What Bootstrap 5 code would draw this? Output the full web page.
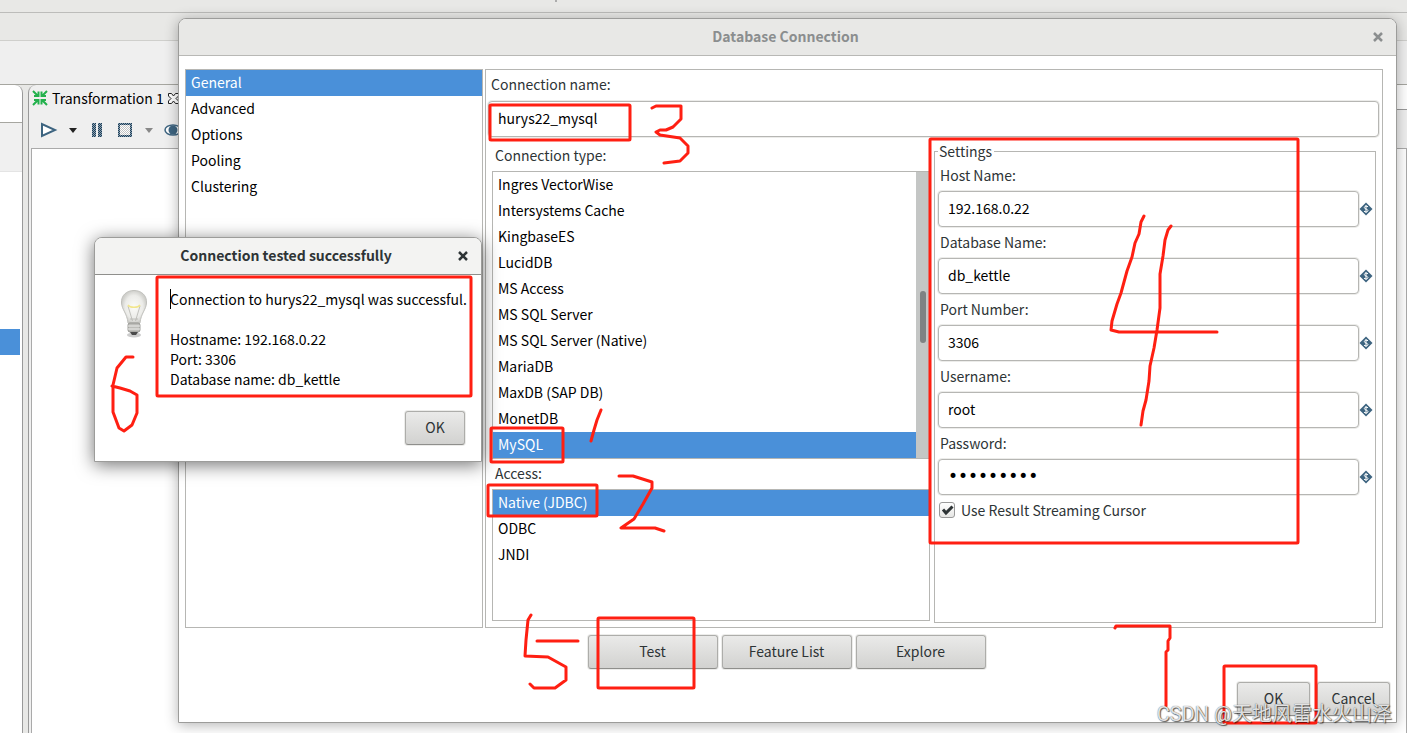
<!DOCTYPE html>
<html lang="en">
<head>
<meta charset="utf-8">
<meta name="viewport" content="width=device-width, initial-scale=1">
<title>Database Connection</title>
<link href="https://cdn.jsdelivr.net/npm/bootstrap@5.3.0/dist/css/bootstrap.min.css" rel="stylesheet">
<style>
:root{--line:#b6b6b3;--pick:#4a90d9;--ink:#2e3436;--ui:"Noto Sans CJK SC","Noto Sans",sans-serif}
body{font-family:var(--ui);font-size:14px;line-height:20px;color:#000;background:#fff;overflow:hidden}
/* application behind the dialogs */
.band-a{height:13px;background:#e8e8e6;border-bottom:1px solid #bcbcba}
.band-b{height:28px;background:#e8e8e6;border-bottom:1px solid #cfcfcc}
.band-c{height:43px;background:#efefef}
.workspace{border-top:1px solid #a6a6a0;background:#e8e8e6}
.side{width:23px;background:#fff;border-right:1px solid #999;border-top-right-radius:8px}
.side-tab{height:38px;border-bottom:1px solid #a6a6a0}
.side-bar{height:49px;background:#f0f0f0;border-bottom:1px solid #e4e4e4}
.side-pick{height:26px;width:20px;margin-top:157px;background:var(--pick)}
.editor{margin-left:5px;border-left:1px solid #999;background:#efefef;border-top-left-radius:8px}
.tabs{height:26px;padding-left:3px;gap:4px}
.tabs-end{width:14px;height:25px;background:#fff;border-bottom:1px solid #999}
.tools{height:37px;padding-left:11px}
.canvas{margin-left:2px;border:1px solid #aaa;border-bottom:0;background:#fff}
/* windows */
.win{background:#fff;border:1px solid #9c9c9a;border-radius:8px 8px 0 0}
.win-main{left:178px;right:10px;top:18px;box-shadow:0 2px 14px rgba(0,0,0,.3)}
.win-note{left:94px;top:237px;width:388px;box-shadow:0 3px 18px rgba(0,0,0,.55)}
.titlebar{height:37px;background:#e8e8e6;border-bottom:1px solid #b8b8b5;border-radius:7px 7px 0 0;color:#8b8e8f;font-weight:700;padding:0 12px 2px}
.win-note .titlebar{background:#f3f3f2;border-color:#8f8f8c;color:var(--ink)}
.close-x{border:0;background:none;padding:0;width:12px;height:12px;display:flex;color:inherit}
.win-body{padding:13px 13px 0 6px;gap:2px}
.frame{border:1px solid var(--line)}
.cats{width:298px}
.panel{min-height:559px;padding:4px 3px 4px 2px}
.picker{border-radius:0;--bs-list-group-border-radius:0}
.picker .list-group-item{border:0;padding:2px 5px 4px;color:#000;line-height:20px}
.picker .list-group-item.active{background:var(--pick);color:#fff;margin-top:0}
.cap{color:var(--ink);line-height:20px;display:block}
.cap-name{padding:0 3px 7px}
.cap-type{padding:8px 3px 6px}
.cap-access{padding:4px 3px 6px}
.field{height:36px;border:1px solid var(--line);border-radius:4px;padding:0 9px 2px;font-size:14px;color:#000;box-shadow:0 0 0 1px #ececea}
.field[type=password]{font:17px "DejaVu Sans",sans-serif}
.type-list{height:288px}
.track{width:13px;background:#c4c6c5;padding:119px 3px 0 4px}
.thumb{height:52px;background:#7e8283;border-radius:3px}
.access-list{height:132px}
.left-col{flex:1;padding:0 0 0 4px}
.set{width:442px;border:1px solid var(--line);padding:0 2px 0 3px;height:482px;margin:4px 3px 0 4px}
.set legend{float:none;width:auto;font-size:14px;line-height:20px;color:var(--ink);margin:0 0 4px;padding:0 2px 0 1px}
.set .field{width:421px}
.set-row{height:67px}
.set-row .cap{padding:0 2px;margin-bottom:6px}
.tick-row{gap:6px;padding-left:1px}
.tick{appearance:none;width:16px;height:16px;border:1px solid #999;border-radius:3px;margin:0;background:linear-gradient(#fff,#e6e6e4)}
.tick:checked{background:url("data:image/svg+xml,%3Csvg xmlns='http://www.w3.org/2000/svg' viewBox='0 0 14 14'%3E%3Cpath d='M3 6.500L6 10L12.500 3.500' fill='none' stroke='%232e3436' stroke-width='3'/%3E%3C/svg%3E") center/14px no-repeat,linear-gradient(#fff,#e6e6e4)}
.btn-gtk{height:34px;padding:0 0 2px;font-size:14px;color:var(--ink);background:linear-gradient(#eaeae9,#d2d2d0);border:1px solid #adadaa;border-bottom-color:#8f8f8c;border-radius:3px;box-shadow:0 0 0 1px #ececea}
.btn-wide{width:130px}
.btn-mid{width:73px}
.btn-small{width:60px}
.actions{padding:7px 2px 0 0}
.closing{padding:13px 6px 6px 0;gap:7px}
.note-body{padding:14px 0 0 24px;gap:21px}
.note-foot{padding:22px 16px 16px}
.caret{border-left:1px solid #000;margin-right:-1px}
.marks{left:0;top:0;pointer-events:none;z-index:5}
.credit{right:15px;bottom:4px;z-index:6;font:20px/30px Roboto,"Noto Sans CJK SC",sans-serif;color:rgba(255,255,255,.85);text-shadow:1px 1px 1px rgba(0,0,0,.6),0 0 1px rgba(0,0,0,.7)}
</style>
</head>
<body>
<main class="position-relative min-vh-100 d-flex flex-column">
  <div class="band-a"></div><div class="band-b"></div><div class="band-c"></div>
  <div class="workspace d-flex flex-grow-1">
    <div class="side"><div class="side-tab"></div><div class="side-bar"></div><div class="side-pick"></div></div>
    <div class="editor flex-grow-1 d-flex flex-column">
      <div class="tabs d-flex align-items-center">
        <svg width="16" height="16" viewBox="0 0 16 16" fill="none" stroke="#22b14c" stroke-width="2"><path d="M1 1L6 6M15 1L10 6M1 15L6 10M15 15L10 10M2 6H6.500V1.500M9.500 1.500V6H14M2 10H6.500V14.500M9.500 14.500V10H14"/></svg>
        <span>Transformation 1</span>
        <svg width="11" height="11" viewBox="0 0 11 11" fill="#fff" stroke="#222"><path d="M.5.5h3l2 2.500 2-2.500h3v2.500L8 5.500l2.500 2.500v2.500h-3l-2-2.500-2 2.500h-3V8L3 5.500.5 3z"/></svg>
        <span class="tabs-end ms-auto align-self-start"></span>
      </div>
      <div class="tools d-flex align-items-center">
        <svg width="150" height="16" viewBox="0 0 150 16"><defs><pattern id="dots" width="2" height="2" patternUnits="userSpaceOnUse"><path d="M0 0h1v1H0zM1 1h1v1H1z" fill="#1d3e58"/></pattern><pattern id="faint" width="2" height="2" patternUnits="userSpaceOnUse"><path d="M0 0h1v1H0zM1 1h1v1H1z" fill="#c4c4c4"/></pattern></defs>
          <path d="M2 2v12l13-6z" fill="#fff" stroke="#3d6480" stroke-width="2"/><path d="M29 6h8l-4 5z" fill="#222"/>
          <path d="M52 1h4v14h-4zM58 1h4v14h-4z" fill="#8ba0b0"/><path d="M52 1h4v14h-4zM58 1h4v14h-4z" fill="url(#dots)"/>
          <path d="M79 2h12v12h-12z" fill="#fff" stroke="#8ba0b0" stroke-width="2"/><path d="M80 3h10v10h-10z" fill="url(#faint)"/><path d="M79 2h12v12h-12z" fill="none" stroke="url(#dots)" stroke-width="2"/><path d="M105 6h8l-4 5z" fill="#888"/>
          <ellipse cx="133" cy="8" rx="8" ry="5" fill="#fff" stroke="#3d6480" stroke-width="1.500"/><circle cx="133" cy="8" r="4.500" fill="#3d6480"/></svg>
      </div>
      <div class="canvas flex-grow-1"></div>
    </div>
  </div>

  <section class="win win-main position-absolute">
    <header class="titlebar d-flex align-items-center"><span class="flex-grow-1 text-center ps-2">Database Connection</span>
      <button class="close-x" type="button" aria-label="Close"><svg width="12" height="12" viewBox="0 0 12 12" stroke="currentColor" stroke-width="2.500"><path d="M2 3L10 11M10 3L2 11"/></svg></button></header>
    <div class="win-body d-flex">
      <nav class="cats frame">
        <div class="list-group picker">
          <button type="button" class="list-group-item list-group-item-action active">General</button>
          <button type="button" class="list-group-item list-group-item-action">Advanced</button>
          <button type="button" class="list-group-item list-group-item-action">Options</button>
          <button type="button" class="list-group-item list-group-item-action">Pooling</button>
          <button type="button" class="list-group-item list-group-item-action">Clustering</button>
        </div>
      </nav>
      <form class="panel frame flex-grow-1">
        <label class="cap cap-name" for="cname">Connection name:</label>
        <input id="cname" class="field w-100" value="hurys22_mysql">
        <div class="d-flex">
          <div class="left-col">
            <div class="cap cap-type">Connection type:</div>
            <div class="frame type-list d-flex">
              <div class="list-group picker flex-grow-1">
                <button type="button" class="list-group-item list-group-item-action">Ingres VectorWise</button>
                <button type="button" class="list-group-item list-group-item-action">Intersystems Cache</button>
                <button type="button" class="list-group-item list-group-item-action">KingbaseES</button>
                <button type="button" class="list-group-item list-group-item-action">LucidDB</button>
                <button type="button" class="list-group-item list-group-item-action">MS Access</button>
                <button type="button" class="list-group-item list-group-item-action">MS SQL Server</button>
                <button type="button" class="list-group-item list-group-item-action">MS SQL Server (Native)</button>
                <button type="button" class="list-group-item list-group-item-action">MariaDB</button>
                <button type="button" class="list-group-item list-group-item-action">MaxDB (SAP DB)</button>
                <button type="button" class="list-group-item list-group-item-action">MonetDB</button>
                <button type="button" class="list-group-item list-group-item-action active">MySQL</button>
              </div>
              <div class="track"><div class="thumb"></div></div>
            </div>
            <div class="cap cap-access">Access:</div>
            <div class="frame access-list">
              <div class="list-group picker">
                <button type="button" class="list-group-item list-group-item-action active">Native (JDBC)</button>
                <button type="button" class="list-group-item list-group-item-action">ODBC</button>
                <button type="button" class="list-group-item list-group-item-action">JNDI</button>
              </div>
            </div>
          </div>
          <fieldset class="set">
            <legend>Settings</legend>
            <div class="set-row"><label class="cap" for="host">Host Name:</label><div class="d-flex align-items-center"><input id="host" class="field" value="192.168.0.22"><svg width="14" height="14"><use href="#var"/></svg></div></div>
            <div class="set-row"><label class="cap" for="db">Database Name:</label><div class="d-flex align-items-center"><input id="db" class="field" value="db_kettle"><svg width="14" height="14"><use href="#var"/></svg></div></div>
            <div class="set-row"><label class="cap" for="port">Port Number:</label><div class="d-flex align-items-center"><input id="port" class="field" value="3306"><svg width="14" height="14"><use href="#var"/></svg></div></div>
            <div class="set-row"><label class="cap" for="user">Username:</label><div class="d-flex align-items-center"><input id="user" class="field" value="root"><svg width="14" height="14"><use href="#var"/></svg></div></div>
            <div class="set-row"><label class="cap" for="pw">Password:</label><div class="d-flex align-items-center"><input id="pw" type="password" class="field" value="hurys2022"><svg width="14" height="14"><use href="#var"/></svg></div></div>
            <div class="tick-row d-flex align-items-center"><input id="stream" type="checkbox" class="tick" checked><label class="cap" for="stream">Use Result Streaming Cursor</label></div>
          </fieldset>
        </div>
      </form>
    </div>
    <div class="actions d-flex justify-content-center gap-1">
      <button type="button" class="btn btn-gtk btn-wide">Test</button>
      <button type="button" class="btn btn-gtk btn-wide">Feature List</button>
      <button type="button" class="btn btn-gtk btn-wide">Explore</button>
    </div>
    <div class="closing d-flex justify-content-end">
      <button type="button" class="btn btn-gtk btn-mid">OK</button>
      <button type="button" class="btn btn-gtk btn-mid">Cancel</button>
    </div>
  </section>

  <section class="win win-note position-absolute">
    <header class="titlebar d-flex align-items-center"><span class="flex-grow-1 text-center ps-2">Connection tested successfully</span>
      <button class="close-x" type="button" aria-label="Close"><svg width="12" height="12" viewBox="0 0 12 12" stroke="currentColor" stroke-width="2.500"><path d="M2 3L10 11M10 3L2 11"/></svg></button></header>
    <div class="note-body d-flex">
      <svg width="30" height="50" viewBox="0 0 30 50"><defs><radialGradient id="glass"><stop offset="0" stop-color="#fbfbf8"/><stop offset=".7" stop-color="#ecece9"/><stop offset="1" stop-color="#cfcfcb"/></radialGradient></defs>
        <ellipse cx="15" cy="46" rx="7" ry="2.500" fill="#ccc"/>
        <path d="M15 1.500C7.500 1.500 2 6.500 2.500 14c.5 7 5.500 10 6.500 20h12c1-10 6-13 6.500-20C28 6.500 22.500 1.500 15 1.500z" fill="url(#glass)" stroke="#c0c0bc"/>
        <path d="M9 17l4.500 15M21 17l-4.500 15M11 30h8" fill="none" stroke="#b5b5b0" stroke-width=".8"/><path d="M9 16c2 3 10 3 12 0" fill="none" stroke="#f2e68c" stroke-width="1.500"/>
        <rect x="9" y="34" width="12" height="9" rx="2" fill="#bdbdb9" stroke="#8a8a86" stroke-width=".8"/><path d="M9 37h12M9 40h12" stroke="#ededeb"/><path d="M11 43h8l-2 3h-4z" fill="#4a4a4a"/></svg>
      <div><span class="caret"></span>Connection to hurys22_mysql was successful.<br><br>Hostname: 192.168.0.22<br>Port: 3306<br>Database name: db_kettle</div>
    </div>
    <div class="d-flex justify-content-end note-foot"><button type="button" class="btn btn-gtk btn-small">OK</button></div>
  </section>

  <svg class="marks position-absolute w-100 h-100" viewBox="0 0 1407 733" fill="none" stroke="#ff1f12" stroke-width="3" stroke-linejoin="round" stroke-linecap="round">
    <path d="M556 0V2" stroke="#999" stroke-width="1.500" stroke-linecap="butt"/>
    <rect x="490" y="105" width="140" height="35" rx="1"/><rect x="157" y="277" width="314" height="119" rx="1"/><rect x="491" y="428" width="72" height="34" rx="1"/><rect x="488" y="485" width="109" height="31" rx="1"/><rect x="930" y="139" width="368" height="404" rx="1"/><rect x="598" y="618" width="96" height="70" rx="1"/><rect x="1224" y="666" width="92" height="57" rx="1"/>
    <path d="M652 108L656 106H681V119L673 127L666 130H660L656 132L660 135L680 138L688 146V153L680 161L664 163M601 410L597 420L594 430L591 441M619 476H633L652 482V488L643 504L634 519L621 528H655L664 531M531 615L528 620L526 640L525 656L548 657L566 667V680L555 688H534L530 684M537 641H578M133 357H126L117 368L113 385V412L119 428L124 431L132 425L137 413V395L130 391L120 388L112 386M1144 216L1141 222L1139 234L1135 243L1132 257L1127 271L1121 293L1117 304L1112 321L1111 330L1119 332H1217M1171 226L1168 230L1165 240L1163 256L1160 274V308L1157 330L1154 348L1150 366L1149 381L1146 400L1143 411L1141 425M1115 628L1116 626H1170V638L1168 641V650L1166 652V706"/>
  </svg>
  <div class="credit position-absolute">CSDN @天地风雷水火山泽</div>
</main>
<svg class="d-none"><symbol id="var" viewBox="0 0 14 14"><path d="M7 .5L13.500 7 7 13.500.5 7z" fill="#3d6480"/><path d="M9 4.800C8 3.800 5.300 4 5.300 5.600S9 7 9 8.600 6 10.200 5 9.200M7 3v8" fill="none" stroke="#fff"/></symbol></svg>
<script src="https://cdn.jsdelivr.net/npm/bootstrap@5.3.0/dist/js/bootstrap.bundle.min.js"></script>
</body>
</html>
